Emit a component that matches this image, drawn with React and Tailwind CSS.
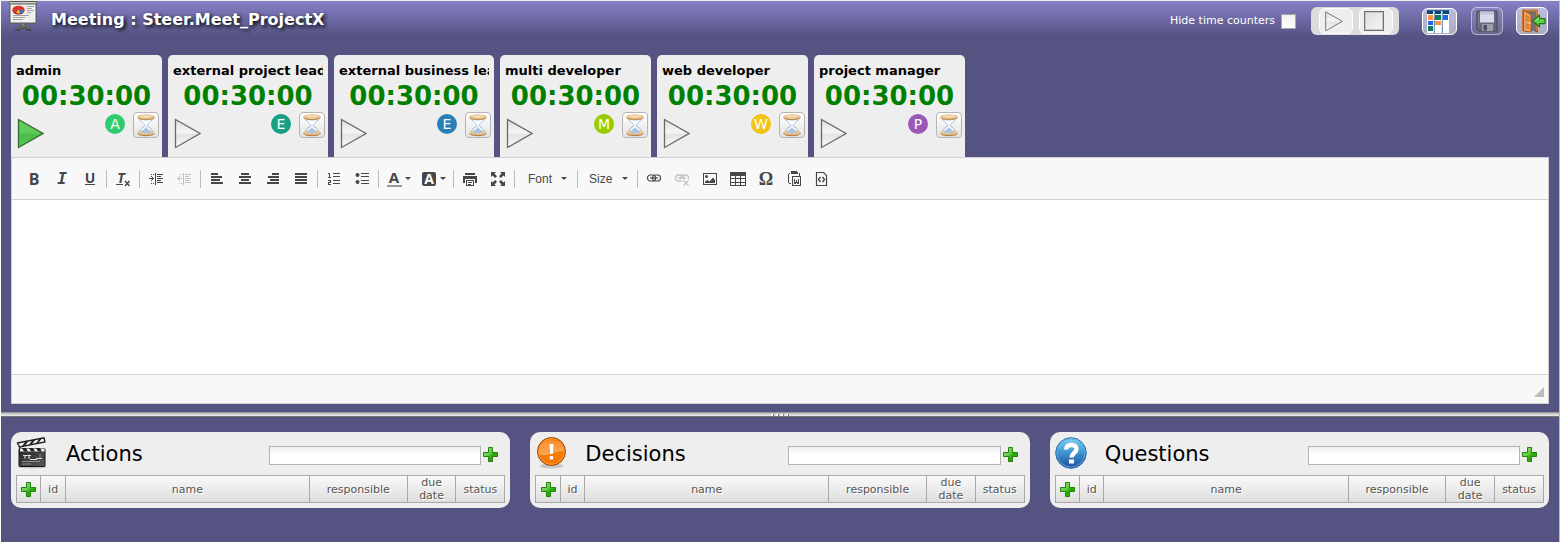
import React from "react";

const participants = [
  { name: "admin", letter: "A", color: "bg-[#2ecc71]", active: true },
  { name: "external project lead", letter: "E", color: "bg-[#16a085]" },
  { name: "external business lead", letter: "E", color: "bg-[#2980b9]" },
  { name: "multi developer", letter: "M", color: "bg-[#99cc00]" },
  { name: "web developer", letter: "W", color: "bg-[#f1c40f]" },
  { name: "project manager", letter: "P", color: "bg-[#9b59b6]" },
];

/* ---------- header icons ---------- */

function BoardIcon() {
  return (
    <svg width="30" height="31" viewBox="0 0 30 31" aria-hidden="true">
      <path d="M15 22v6M15 23l-6 5.500h3M15 23l6 5.500h-3" stroke="#3f4238" strokeWidth="2.200" fill="none" />
      <path d="M15 22v5M15 23l-6 5M15 23l6 5" stroke="#9a9f8c" strokeWidth="1" fill="none" />
      <rect x="2" y="2" width="26" height="20" fill="#fafafa" stroke="#55574f" strokeWidth="1" />
      <rect x="3.500" y="4" width="23" height="16.500" fill="#eeeeee" />
      <rect x="1" y="0.500" width="28" height="2.500" rx="1" fill="#c9cbc4" stroke="#55574f" />
      <ellipse cx="10.500" cy="9.500" rx="6" ry="4" fill="#8d1a16" />
      <ellipse cx="10.500" cy="8.500" rx="6" ry="3.800" fill="#e0352f" />
      <path d="M10.500 8.500L16.400 9.500A6 4 0 0 1 12 12.400z" fill="#3c74c8" />
      <path d="M10.500 8.500L12 12.400A6 4 0 0 1 8 12.100z" fill="#edc93a" />
      <path d="M19 5.500h7M19 7.500h5M19 9.500h7M19 11.500h4M5 14.500h16M5 16.500h12M5 18.500h10" stroke="#a3a3a3" strokeWidth="1" />
    </svg>
  );
}

function PlayIcon({ className, active, id }) {
  return (
    <svg className={className} viewBox="0 0 28 32" aria-hidden="true">
      <defs>
        <linearGradient id={id} x1="0" y1="0" x2="0" y2="1">
          <stop offset="0" stopColor={active ? "#62ca5e" : "#dcdedb"} />
          <stop offset="0.450" stopColor={active ? "#5fcb5c" : "#f6f6f5"} />
          <stop offset="0.550" stopColor={active ? "#4dbb49" : "#e3e5e2"} />
          <stop offset="1" stopColor={active ? "#5bc858" : "#fafafa"} />
        </linearGradient>
      </defs>
      <path d="M2.500 2.500L27 16.500L2.500 30.500z" fill={`url(#${id})`} stroke={active ? "#2f6b2d" : "#666b66"} strokeWidth="1.300" />
    </svg>
  );
}

function StopIcon() {
  return (
    <svg width="22" height="22" viewBox="0 0 22 22" aria-hidden="true">
      <defs>
        <linearGradient id="stop-fill" x1="0" y1="0" x2="1" y2="1">
          <stop offset="0" stopColor="#dcdedb" />
          <stop offset="1" stopColor="#f7f7f6" />
        </linearGradient>
      </defs>
      <rect x="1.500" y="1.500" width="19" height="19" fill="url(#stop-fill)" stroke="#6f736f" />
      <rect x="2.500" y="2.500" width="17" height="17" fill="none" stroke="#c4c8c4" />
    </svg>
  );
}

function KanbanIcon() {
  return (
    <svg width="22" height="23" viewBox="0 0 22 23" shapeRendering="crispEdges" aria-hidden="true">
      <rect x="0" y="0" width="22" height="23" fill="#dbe6f0" />
      {[0, 8, 16].map((x) => (
        <g key={x}>
          <rect x={x} y="0" width="6" height="23" fill="#ffffff" />
          <rect x={x} y="0" width="6" height="4" fill="#0c4470" />
        </g>
      ))}
      <path d="M7 0v23M15 0v23" stroke="#6f9cc0" strokeWidth="1" />
      <rect x="0" y="0" width="22" height="1" fill="#2f688f" />
      <rect x="1" y="5" width="5" height="5" fill="#ff9340" />
      <rect x="1" y="11" width="5" height="4" fill="#2d64e6" />
      <rect x="1" y="16" width="5" height="5" fill="#0b7a63" />
      <rect x="8" y="5" width="6" height="5" fill="#0b7a63" />
      <rect x="8" y="11" width="6" height="4" fill="#ff9340" />
      <rect x="16" y="5" width="5" height="5" fill="#2d64e6" />
    </svg>
  );
}

function SaveIcon() {
  return (
    <svg width="22" height="22" viewBox="0 0 22 22" aria-hidden="true">
      <path d="M1 1h20v20H3l-2-2z" fill="#67677a" stroke="#484858" />
      <rect x="4" y="1.500" width="14" height="11" fill="#d9d9ec" />
      <rect x="4" y="1.500" width="14" height="3" fill="#c3c3dc" />
      <rect x="6" y="14" width="11" height="7" fill="#9c9cab" />
      <rect x="7.500" y="15" width="3.500" height="5.500" fill="#4c4c5a" />
      <path d="M2.500 3v15" stroke="#80808f" />
    </svg>
  );
}

function ExitIcon() {
  return (
    <svg width="25" height="24" viewBox="0 0 25 24" aria-hidden="true">
      <path d="M2 22V1.500h14V22" fill="#77706c" stroke="#cf7428" strokeWidth="2" />
      <path d="M14 22.500h3" stroke="#a65414" strokeWidth="1.500" />
      <path d="M2.500 1.500l7.500 4v17.500L2.500 22z" fill="#eda566" stroke="#a85a1c" strokeWidth="1" />
      <path d="M4.300 5.500l4 2v5.500l-4-1z M4.300 14l4 1v5.500l-4-1z" fill="#d9843f" />
      <circle cx="8.800" cy="13.800" r="0.900" fill="#fbe3a0" />
      <path d="M12 12l6.500-6v3.600H24v5h-5.500V18z" fill="#5fd04b" stroke="#1d7c12" strokeWidth="1.200" strokeLinejoin="round" />
      <path d="M14 12l4-3.500" stroke="#b0f0a2" strokeWidth="1" />
    </svg>
  );
}

function HourglassIcon() {
  return (
    <svg width="22" height="24" viewBox="0 0 22 24" aria-hidden="true">
      <path d="M4.500 4.500c0 5 5.200 5.200 5.200 7.500s-5.200 2.500-5.200 7.500h13c0-5-5.200-5.200-5.200-7.500s5.200-2.500 5.200-7.500z" fill="#e8f1fc" stroke="#a3b8da" strokeWidth="1" />
      <path d="M6.500 8h9c-1 2-3.300 2.600-3.800 4.200h-1.400C9.800 10.600 7.500 10 6.500 8z" fill="#fbfdff" />
      <path d="M11 14.500c.5 2 3.500 2.500 4.300 4.500H6.700c.8-2 3.800-2.500 4.300-4.500z" fill="#8db9f0" />
      <ellipse cx="11" cy="4.500" rx="8.700" ry="2.700" fill="#c08d52" />
      <ellipse cx="11" cy="3.600" rx="8.700" ry="2.400" fill="#e9c593" />
      <ellipse cx="11" cy="3.300" rx="6" ry="1.200" fill="#f3dcb8" />
      <ellipse cx="11" cy="20.500" rx="8.700" ry="2.700" fill="#b98548" />
      <ellipse cx="11" cy="19.500" rx="8.700" ry="2.300" fill="#e9c593" />
      <ellipse cx="11" cy="19" rx="5" ry="1.200" fill="#a5c6ee" />
    </svg>
  );
}

function AddIcon({ id }) {
  return (
    <svg width="15" height="15" viewBox="0 0 15 15" aria-hidden="true">
      <defs>
        <linearGradient id={id} x1="0" y1="0" x2="1" y2="1">
          <stop offset="0" stopColor="#a0e58c" />
          <stop offset="0.450" stopColor="#5fcb42" />
          <stop offset="0.600" stopColor="#25ab04" />
          <stop offset="1" stopColor="#2fb80c" />
        </linearGradient>
      </defs>
      <path d="M5.500 0.500h4v5h5v4h-5v5h-4v-5h-5v-4h5z" fill={`url(#${id})`} stroke="#268010" />
    </svg>
  );
}

/* ---------- section icons ---------- */

function ClapIcon() {
  return (
    <svg width="32" height="32" viewBox="0 0 32 32" aria-hidden="true">
      <defs>
        <linearGradient id="clap-board" x1="0" y1="0" x2="1" y2="1">
          <stop offset="0" stopColor="#232323" />
          <stop offset="1" stopColor="#5a5a5a" />
        </linearGradient>
      </defs>
      <ellipse cx="16" cy="30" rx="15" ry="1.500" fill="#c6c6c6" />
      <path d="M1.500 6L28 0.800l1 4.200L3.500 10z" fill="#f2f2f2" stroke="#1c1c1c" strokeWidth="1.300" />
      <path d="M6 9l3.500-4.500 3-.6-3.500 4.600zM13 7.700l3.500-4.600 3-.6-3.500 4.600zM20 6.300l3.500-4.500 2.500-.5-3.500 4.500z" fill="#1c1c1c" />
      <path d="M1.500 6l4 5.500-2 1z" fill="#444" />
      <rect x="3" y="11.500" width="26" height="18" rx="1" fill="url(#clap-board)" stroke="#161616" />
      <path d="M4 11.500h24.500v3H4z" fill="#f4f4f4" />
      <path d="M6 11h4l2 3.500h-4zM13 11h4l2 3.500h-4zM20 11h4l2 3.500h-4z" fill="#222" />
      <path d="M7 18.500h8M9 18v3.500M13 19v3M14 22.500h7M20 21.500h6" stroke="#dcdcdc" strokeWidth="1.100" fill="none" />
      <path d="M24 17v4M6 24.500h18M6 27h9" stroke="#8b8b8b" strokeWidth="1" />
    </svg>
  );
}

function AlertIcon() {
  return (
    <svg width="32" height="32" viewBox="0 0 32 32" aria-hidden="true">
      <defs>
        <linearGradient id="alert-top" x1="0" y1="0" x2="0" y2="1">
          <stop offset="0" stopColor="#fb8f2c" />
          <stop offset="1" stopColor="#fba859" />
        </linearGradient>
      </defs>
      <ellipse cx="16.500" cy="29" rx="12" ry="2.500" fill="#c6c6c6" />
      <circle cx="16.500" cy="14.500" r="14" fill="#f57900" stroke="#8f4a0c" />
      <circle cx="16.500" cy="14.500" r="12.800" fill="none" stroke="#ff9a42" />
      <path d="M4 17a12.500 12.500 0 0 1 25-3c-5 1-8 1-12 2.500s-8 2.500-13 .5z" fill="url(#alert-top)" />
      <path d="M14.500 7h4l-.7 10h-2.600z" fill="#fff" />
      <rect x="14.700" y="19" width="3.600" height="3.500" rx="1" fill="#fff" />
    </svg>
  );
}

function QuestionIcon() {
  return (
    <svg width="32" height="32" viewBox="0 0 32 32" aria-hidden="true">
      <defs>
        <linearGradient id="question-fill" x1="0" y1="0" x2="0" y2="1">
          <stop offset="0" stopColor="#7fd6f5" />
          <stop offset="0.500" stopColor="#3f93cf" />
          <stop offset="1" stopColor="#1d4c9a" />
        </linearGradient>
      </defs>
      <circle cx="16" cy="16" r="15.300" fill="url(#question-fill)" stroke="#2b6db3" />
      <circle cx="16" cy="16" r="14" fill="none" stroke="#63aee0" strokeWidth="0.800" />
      <path d="M11 12.500c0-6 10.500-6 10.500-.5 0 4-5 4-5 8.500" fill="none" stroke="#fff" strokeWidth="4.400" />
      <rect x="14" y="22.500" width="5" height="4" fill="#fff" />
    </svg>
  );
}

/* ---------- editor toolbar ---------- */

function Glyph({ children, crisp = true }) {
  return (
    <svg width="16" height="16" viewBox="0 0 16 16" fill="#474747" shapeRendering={crisp ? "crispEdges" : "auto"} className="shrink-0 overflow-visible" aria-hidden="true">
      {children}
    </svg>
  );
}

function ToolButton({ label, children, disabled }) {
  return (
    <button type="button" aria-label={label} disabled={disabled} className="flex h-7 w-7 shrink-0 items-center justify-center disabled:opacity-30">
      {children}
    </button>
  );
}

function Caret() {
  return (
    <svg width="6" height="3" viewBox="0 0 6 3" fill="#474747" aria-hidden="true">
      <path d="M0 0h6L3 3z" />
    </svg>
  );
}

const Separator = () => <span className="mx-0.5 h-[18px] w-px shrink-0 bg-[#bcbcbc]" />;

const lines = (rows) => rows.map(([x, w], i) => <rect key={i} x={x} y={2 + i * 3} width={w} height="2" />);

const indentLines = (
  <>
    <path d="M7 2h1v12H7z" />
    <path d="M9 3h6v1H9zM9 5h4v1H9zM9 7h6v1H9zM9 9h4v1H9zM9 11h6v1H9z" />
    <path d="M3 3h1v1H3zM5 3h1v1H5zM3 12h1v1H3zM5 12h1v1H5z" />
  </>
);

function Toolbar() {
  return (
    <div role="toolbar" aria-label="Editor" className="flex h-[42px] items-center border-b border-[#d1d1d1] bg-[#f8f8f8] pl-2 text-[#474747]">
      <ToolButton label="Bold">
        <span className="font-['Open_Sans',sans-serif] text-base leading-4 font-bold">B</span>
      </ToolButton>
      <ToolButton label="Italic">
        <span className="font-['DejaVu_Sans_Mono',monospace] text-base leading-4 font-bold italic">I</span>
      </ToolButton>
      <ToolButton label="Underline">
        <span className="border-b border-[#474747] font-['Open_Sans',sans-serif] text-sm leading-3 font-bold">U</span>
      </ToolButton>
      <Separator />
      <ToolButton label="Remove Format">
        <Glyph crisp={false}>
          <text x="2" y="12" fontSize="14" fontWeight="bold" fontStyle="italic" fontFamily="DejaVu Sans Mono, monospace">T</text>
          <path d="M1 13h7v1H1z" />
          <path d="M10 10l4.500 5M14.500 10L10 15" stroke="#474747" strokeWidth="1.500" />
        </Glyph>
      </ToolButton>
      <Separator />
      <ToolButton label="Increase Indent">
        <Glyph>
          {indentLines}
          <path d="M1 7h5v1H1zM4 6h1v3H4zM3 5h1v1H3zM3 9h1v1H3z" />
        </Glyph>
      </ToolButton>
      <ToolButton label="Decrease Indent" disabled>
        <Glyph>
          {indentLines}
          <path d="M1 7h5v1H1zM2 6h1v3H2zM3 5h1v1H3zM3 9h1v1H3z" />
        </Glyph>
      </ToolButton>
      <Separator />
      <ToolButton label="Align Left"><Glyph>{lines([[2, 7], [2, 11], [2, 9], [2, 12]])}</Glyph></ToolButton>
      <ToolButton label="Center"><Glyph>{lines([[4, 8], [2, 12], [4, 8], [2, 12]])}</Glyph></ToolButton>
      <ToolButton label="Align Right"><Glyph>{lines([[7, 7], [3, 11], [5, 9], [2, 12]])}</Glyph></ToolButton>
      <ToolButton label="Justify"><Glyph>{lines([[2, 12], [2, 12], [2, 12], [2, 12]])}</Glyph></ToolButton>
      <Separator />
      <ToolButton label="Numbered List">
        <Glyph>
          <path d="M2 2h2v4H3V3H2zM2 6h3v1H2zM2 9h3v3H3v1h2v1H2v-3h2v-1H2z" />
          <path d="M7 2h7v1H7zM7 5h7v1H7zM7 9h7v1H7zM7 12h7v1H7z" />
        </Glyph>
      </ToolButton>
      <ToolButton label="Bulleted List">
        <Glyph crisp={false}>
          <circle cx="3.500" cy="4" r="2" />
          <circle cx="3.500" cy="11" r="2" />
          <path d="M7 2h8v1H7zM7 5h8v1H7zM7 9h8v1H7zM7 12h8v1H7z" />
        </Glyph>
      </ToolButton>
      <Separator />
      <button type="button" aria-label="Text Color" className="flex h-7 w-[35px] shrink-0 items-center gap-0.5 pl-1.5">
        <Glyph crisp={false}>
          <text x="7" y="12" fontSize="15" fontWeight="bold" textAnchor="middle" fontFamily="Open Sans, sans-serif">A</text>
          <rect x="0" y="14" width="15" height="2" fill="#999999" />
        </Glyph>
        <Caret />
      </button>
      <button type="button" aria-label="Background Color" className="flex h-7 w-[35px] shrink-0 items-center gap-0.5 pl-1.5">
        <Glyph crisp={false}>
          <rect x="0" y="1" width="14" height="14" rx="2" />
          <text x="7" y="13" fontSize="14" fontWeight="bold" fill="#ffffff" textAnchor="middle" fontFamily="Open Sans, sans-serif">A</text>
        </Glyph>
        <Caret />
      </button>
      <Separator />
      <ToolButton label="Print">
        <Glyph>
          <path d="M3 2h10v2H3zM1 5h14v7h-2V8H3v4H1z" />
          <path d="M4 9h8v6H4zM5 10v4h6v-4z" fillRule="evenodd" />
          <path d="M6 11h4v1H6zM6 13h3v1H6z" />
        </Glyph>
      </ToolButton>
      <ToolButton label="Maximize">
        <Glyph crisp={false}>
          <path d="M1 1h5L4.500 2.500 7 5.200 5.200 7 2.500 4.500 1 6zM15 1v5l-1.500-1.500L10.800 7 9 5.200l2.500-2.700L10 1zM1 15v-5l1.500 1.500L5.200 9 7 10.800 4.500 13.500 6 15zM15 15h-5l1.500-1.500L9 10.800 10.800 9l2.700 2.500L15 10z" />
        </Glyph>
      </ToolButton>
      <Separator />
      <button type="button" className="flex h-7 w-[58px] shrink-0 items-center justify-between pr-2 pl-[11px] font-['Liberation_Sans',sans-serif] text-xs">
        Font <Caret />
      </button>
      <Separator />
      <button type="button" className="flex h-7 w-[55px] shrink-0 items-center justify-between pr-[7px] pl-[9px] font-['Liberation_Sans',sans-serif] text-xs">
        Size <Caret />
      </button>
      <Separator />
      <ToolButton label="Link">
        <Glyph crisp={false}>
          <g fill="none" stroke="#474747" strokeWidth="1.200">
            <rect x="1.500" y="4" width="8" height="6" rx="2.800" />
            <rect x="6.500" y="4" width="8" height="6" rx="2.800" />
            <path d="M4 7h8" />
          </g>
        </Glyph>
      </ToolButton>
      <ToolButton label="Unlink" disabled>
        <Glyph crisp={false}>
          <g fill="none" stroke="#474747" strokeWidth="1.300">
            <path d="M8 10H4a2.500 3 0 0 1 0-6h3.500a2.500 3 0 0 1 2 4M7 8a2.500 3 0 0 1 2-4h3a2.500 3 0 0 1 2.500 4M4 7h8" />
            <path d="M9.500 9.500l5 5M14.500 9.500l-5 5" />
          </g>
        </Glyph>
      </ToolButton>
      <ToolButton label="Image">
        <Glyph crisp={false}>
          <path d="M1 2h14v12H1zM2 3v10h12V3z" fillRule="evenodd" />
          <circle cx="4.500" cy="5.500" r="1.500" />
          <path d="M3 12V10.500L5.500 9l2 1.500L11 6.500l2 2.500v3z" />
        </Glyph>
      </ToolButton>
      <ToolButton label="Table">
        <Glyph>
          <path d="M0 1h16v14H0zM1 5v2h4V5zM6 5v2h4V5zM11 5v2h4V5zM1 8v3h4V8zM6 8v3h4V8zM11 8v3h4V8zM1 12v2h4v-2zM6 12v2h4v-2zM11 12v2h4v-2z" fillRule="evenodd" />
        </Glyph>
      </ToolButton>
      <ToolButton label="Insert Special Character">
        <span className="font-['Liberation_Serif',serif] text-lg leading-4 font-bold">Ω</span>
      </ToolButton>
      <ToolButton label="Paste from Word">
        <Glyph>
          <path d="M5 0h6v1h1v2H5zM3 2h1v1H3zM2 3h1v9H2zM3 12h2v1H3zM13 2h1v3h-1z" />
          <path d="M6 5h9v10H6zM7 6v8h7V6z" fillRule="evenodd" />
          <path d="M8 8h1v3h1V9h1v2h1V8h1v5h-2v-1h-1v1H8z" />
        </Glyph>
      </ToolButton>
      <ToolButton label="Source">
        <Glyph crisp={false}>
          <path d="M2.500 1.500h7l3 3v10h-10z" fill="none" stroke="#474747" strokeWidth="1.200" />
          <path d="M6.500 6L4.500 8.500l2 2.500M8.500 6l2 2.500-2 2.500" fill="none" stroke="#474747" strokeWidth="1.400" />
        </Glyph>
      </ToolButton>
    </div>
  );
}

/* ---------- page parts ---------- */

function Header() {
  return (
    <header className="flex h-[54px] items-start bg-linear-to-b from-[#8781c8] to-[#545381] to-[36px] pr-[11px] pl-[7px] text-white">
      <BoardIcon />
      <h1 className="mt-[9px] ml-[13px] text-base leading-5 font-bold text-shadow-[2px_2px_4px_#000000]">Meeting : Steer.Meet_ProjectX</h1>
      <div className="mt-1.5 ml-auto flex items-center">
        <label htmlFor="hide-counters" className="text-[11px] leading-4">Hide time counters</label>
        <input id="hide-counters" type="checkbox" className="ml-1.5 size-[15px] appearance-none border border-[#a8a8a8] bg-linear-to-b from-[#f0f0f0] to-white" />
        <div className="ml-[15px] flex h-7 items-center gap-1.5 rounded-md bg-[#dcdcdc] pr-1.5 pl-2">
          <button type="button" aria-label="Start meeting" className="flex h-[26px] w-[34px] items-center rounded-md border border-white bg-[#eeeeee] pl-1">
            <PlayIcon id="play-meeting" className="h-[22px] w-[19px]" />
          </button>
          <button type="button" aria-label="Stop meeting" className="flex h-[26px] w-[34px] items-center rounded-md border border-white bg-[#eeeeee] pl-[3px]">
            <StopIcon />
          </button>
        </div>
        <button type="button" aria-label="Kanban" className="ml-[23px] flex h-[27px] w-[35px] items-center rounded-md border border-white bg-white/50 pl-1">
          <KanbanIcon />
        </button>
        <button type="button" aria-label="Save" className="ml-3.5 flex h-7 w-8 items-center rounded-md border border-white/50 bg-white/10 pl-1">
          <SaveIcon />
        </button>
        <button type="button" aria-label="Exit" className="ml-[13px] flex h-7 w-8 items-center rounded-md border border-white bg-white/50 pl-1">
          <ExitIcon />
        </button>
      </div>
    </header>
  );
}

function ParticipantCard({ person, index }) {
  return (
    <section className="h-[102px] max-w-40 min-w-[151px] rounded-t-[5px] bg-[#eeeeee] text-black">
      <h2 className="mx-[5px] overflow-hidden pt-1.5 text-[13px] leading-5 font-bold whitespace-nowrap">{person.name}</h2>
      <p className="text-center text-[26px] leading-[30px] font-bold text-[#008000]">00:30:00</p>
      <div className="flex pt-px pr-[3px] pl-[5px]">
        <button type="button" aria-label={`Start ${person.name}`} className="mt-[5px]">
          <PlayIcon id={`play-${index}`} active={person.active} className="h-8 w-7" />
        </button>
        <span className={`mt-0.5 ml-auto flex size-5 items-center justify-center rounded-full text-sm leading-5 text-white ${person.color}`}>{person.letter}</span>
        <button type="button" aria-label={`Time of ${person.name}`} className="ml-2 flex size-[26px] items-center justify-center rounded border border-[#b4b4b4] bg-linear-to-b from-white to-[#e4e4e4]">
          <HourglassIcon />
        </button>
      </div>
    </section>
  );
}

function ItemPanel({ title, icon }) {
  const id = title.toLowerCase();
  return (
    <section className="min-w-0 flex-1 rounded-[10px] bg-[#eeeeee] p-[5px] text-black">
      <div className="flex h-[38px] items-start pr-[7px]">
        {icon}
        <label htmlFor={`new-${id}`} className="ml-[18px] flex-1 pt-px text-[21px] leading-8">{title}</label>
        <input id={`new-${id}`} type="text" className="mt-[9px] h-[19px] w-[44%] border border-[#b3b3b3] bg-linear-to-b from-[#f0f0f0] to-white to-50% px-1 text-[11px]" />
        <button type="button" aria-label={`Add to ${id}`} className="mt-2.5 ml-0.5">
          <AddIcon id={`add-top-${id}`} />
        </button>
      </div>
      <table className="h-7 w-full table-fixed border-collapse text-[11px] leading-[13px] text-[#555555]">
        <thead>
          <tr className="bg-linear-to-b from-[#fafafa] to-[#dcdcdc] text-shadow-[1px_1px_0_#ffffff]">
            <th className="w-[5%] border border-[#a9a9a9] p-0">
              <button type="button" aria-label={`New ${id}`} className="flex w-full justify-center">
                <AddIcon id={`add-row-${id}`} />
              </button>
            </th>
            <th className="w-[5%] border border-[#a9a9a9] p-0 font-normal">id</th>
            <th className="w-[50%] border border-[#a9a9a9] p-0 font-normal">name</th>
            <th className="w-[20%] border border-[#a9a9a9] p-0 font-normal">responsible</th>
            <th className="w-[10%] border border-[#a9a9a9] p-0 font-normal">due date</th>
            <th className="w-[10%] border border-[#a9a9a9] p-0 font-normal">status</th>
          </tr>
        </thead>
      </table>
    </section>
  );
}

export default function App() {
  return (
    <div className="flex min-h-screen flex-col border-t border-r border-l border-t-[#eeeeee] border-r-[#bbbbbb] border-l-white bg-[#545381] font-['DejaVu_Sans',sans-serif]">
      <Header />
      <main className="px-2.5">
        <div className="flex gap-1.5">
          {participants.map((person, i) => (
            <ParticipantCard key={person.letter + person.name} person={person} index={i} />
          ))}
        </div>
        <div className="border border-[#d1d1d1] bg-white">
          <Toolbar />
          <textarea aria-label="Meeting minutes" className="block h-[174px] w-full resize-none bg-white p-5 text-[13px] outline-none" />
          <div className="flex h-[29px] items-end justify-end border-t border-[#d1d1d1] bg-[#f8f8f8] pr-1 pb-1.5">
            <svg width="10" height="10" viewBox="0 0 10 10" aria-hidden="true">
              <path d="M10 0v10H0z" fill="#bcbcbc" />
            </svg>
          </div>
        </div>
      </main>
      <div role="separator" className="mt-2 flex h-[5px] items-center justify-center gap-0.5 border-t border-b border-t-[#999999] border-b-[#777777] bg-linear-to-b from-[#bdbdbd] to-[#eeeeee]">
        {[0, 1, 2, 3].map((n) => (
          <span key={n} className="h-0.5 w-[3px] border-r border-[#777777] bg-white" />
        ))}
      </div>
      <div className="flex gap-5 px-2.5 pt-[15px]">
        <ItemPanel title="Actions" icon={<ClapIcon />} />
        <ItemPanel title="Decisions" icon={<AlertIcon />} />
        <ItemPanel title="Questions" icon={<QuestionIcon />} />
      </div>
    </div>
  );
}
